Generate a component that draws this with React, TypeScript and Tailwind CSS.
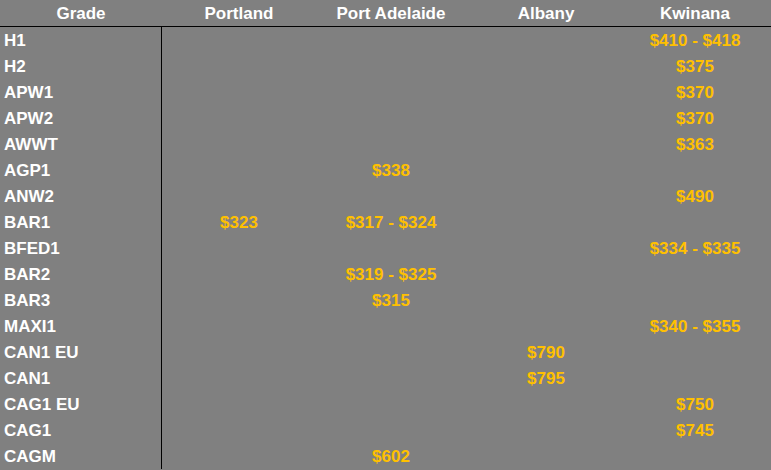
import React from 'react';

const rows: [string, string, string, string, string][] = [
  ['H1', '', '', '', '$410 - $418'],
  ['H2', '', '', '', '$375'],
  ['APW1', '', '', '', '$370'],
  ['APW2', '', '', '', '$370'],
  ['AWWT', '', '', '', '$363'],
  ['AGP1', '', '$338', '', ''],
  ['ANW2', '', '', '', '$490'],
  ['BAR1', '$323', '$317 - $324', '', ''],
  ['BFED1', '', '', '', '$334 - $335'],
  ['BAR2', '', '$319 - $325', '', ''],
  ['BAR3', '', '$315', '', ''],
  ['MAXI1', '', '', '', '$340 - $355'],
  ['CAN1 EU', '', '', '$790', ''],
  ['CAN1', '', '', '$795', ''],
  ['CAG1 EU', '', '', '', '$750'],
  ['CAG1', '', '', '', '$745'],
  ['CAGM', '', '$602', '', ''],
];

const headers = ['Portland', 'Port Adelaide', 'Albany', 'Kwinana'];

const cols = 'grid grid-cols-[162px_154px_150px_160px_138px_1fr]';

export default function App() {
  return (
    <div
      className="w-[771px] h-[470px] overflow-hidden bg-[#808080] font-bold text-[17px] leading-none"
      style={{ fontFamily: '"Liberation Sans", Arial, sans-serif' }}
    >
      <div className={`${cols} h-[27px] border-b border-black text-white items-center`}>
        <div className="text-center">Grade</div>
        {headers.map((h) => (
          <div key={h} className="text-center">
            {h}
          </div>
        ))}
        <div />
      </div>
      {rows.map(([grade, ...vals]) => (
        <div key={grade} className={`${cols} h-[26px] items-center`}>
          <div className="h-full flex items-center pl-[4px] pt-[1px] text-white border-r border-black">
            {grade}
          </div>
          {vals.map((v, i) => (
            <div key={i} className="text-center pt-[1px] text-[#ffc000]">
              {v}
            </div>
          ))}
          <div />
        </div>
      ))}
    </div>
  );
}
